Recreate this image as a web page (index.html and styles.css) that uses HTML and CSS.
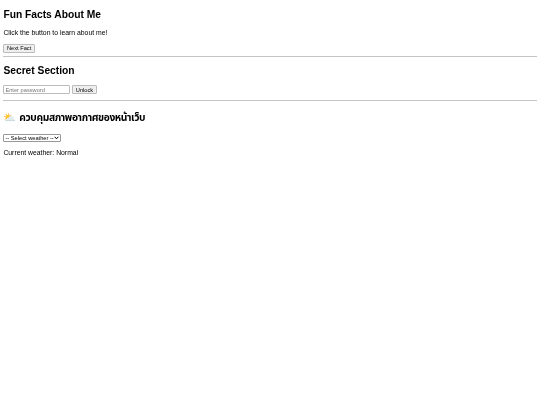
FILE: index.html
```html
<!DOCTYPE html>
<html lang="th">
<head>
    <meta charset="UTF-8">
    <title>Fun Facts About Me</title>
    <link rel="stylesheet" href="styles.css">
</head>
<body>

<h2>Fun Facts About Me</h2>
<p>Click the button to learn about me!</p>
<button class="btn">Next Fact</button>
<hr>

<h2>Secret Section</h2>
<input class="password-input" type="password" placeholder="Enter password">
<button class="btn">Unlock</button>
<p id="secretMessage"></p>
<hr>

<h2 class="weather-heading">⛅ <span class="thai-title">ควบคุมสภาพอากาศของหน้าเว็บ</span></h2>
<select class="weather-select">
    <option>-- Select weather --</option>
</select>
<p>Current weather: Normal</p>

</body>
</html>
```

FILE: styles.css
```css
body {
    font-family: "Liberation Sans", Arial, sans-serif;
    font-size: 6.84px;
    line-height: 8px;
    margin: 0 3.4px;
    color: #000;
    background: #fff;
    filter: blur(0.25px); /* soft text, as in a scaled down page */
}

h2 {
    font-size: 10.26px;
    line-height: 12.2px;
    margin: 8.5px 0 8px;
}

.weather-heading {
    line-height: 15px;
}

.thai-title {
    font-family: "Noto Sans Thai", "Liberation Sans", sans-serif;
    letter-spacing: -0.4px;
}

p {
    margin: 6.84px 0;
}

#secretMessage {
    margin: 6.2px 0;
}

hr {
    margin: 3px 0;
    border: none;
    border-top: 1px solid #c4c4c4;
}

.btn, .password-input, .weather-select {
    font-family: "Liberation Sans", Arial, sans-serif;
    font-size: 5.7px;
    box-sizing: border-box;
    height: 9px;
    vertical-align: top;
    color: #000;
}

.btn {
    padding: 0 2.5px;
    background: #efefef;
    border: 1px solid #bbb;
    border-radius: 1px;
}

.password-input {
    width: 67px;
    padding: 0 1px;
    border: 1px solid #bbb;
    border-radius: 1px;
}

.password-input::placeholder {
    color: #777;
}

.weather-select {
    appearance: none;
    width: 58px;
    height: 8px;
    padding: 0 6px 0 1px;
    border: 1px solid #999;
    border-radius: 1px;
    background: #fff url("data:image/svg+xml,%3Csvg xmlns='http://www.w3.org/2000/svg' width='5' height='4'%3E%3Cpath d='M.7.8 2.5 2.8 4.3.8' fill='none' stroke='%23000' stroke-width='1'/%3E%3C/svg%3E") no-repeat right 1px center;
}
```
